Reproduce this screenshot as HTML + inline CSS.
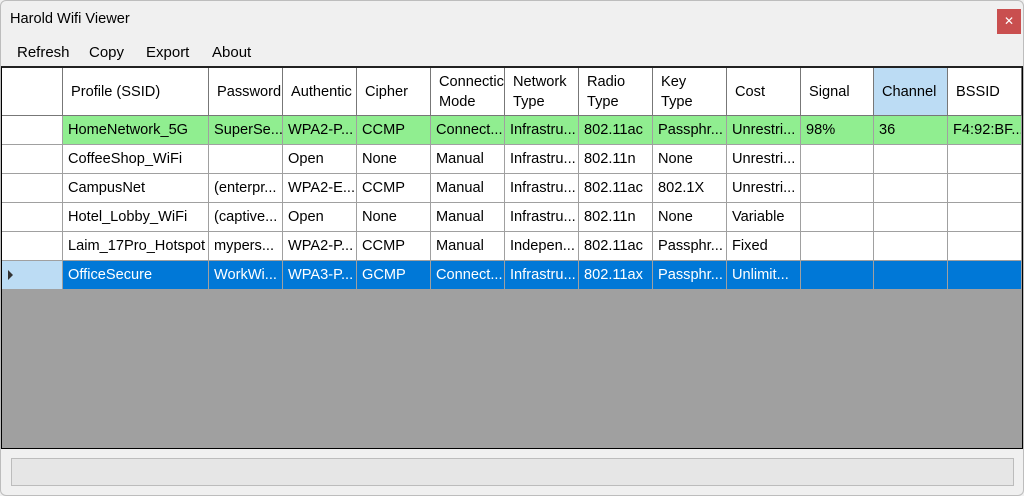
<!DOCTYPE html>
<html><head><style>
*{margin:0;padding:0;box-sizing:border-box}
body{width:1024px;height:496px;background:#f0f0f0;font-family:"Liberation Sans",sans-serif;font-size:14.6px;color:#000;position:relative;overflow:hidden}
.win{position:absolute;left:0;top:0;width:1024px;height:496px;border:1px solid #bdbdbd;border-radius:6px;background:#f0f0f0}
.title{position:absolute;left:10px;top:11px;font-size:14.6px}
.close{position:absolute;left:997px;top:9px;width:24px;height:25px;background:#c94f4f;color:#fff;font-size:12px;text-align:center;line-height:25px}
.menu{position:absolute;top:44px;font-size:15px}
.grid{position:absolute;left:1px;top:66px;width:1022px;height:383px;background:#a0a0a0;border:1px solid #000;border-top:2px solid #222}
.c{position:absolute;white-space:nowrap;overflow:hidden;border-right:1px solid #a0a0a0;border-bottom:1px solid #a0a0a0;padding-left:5px;line-height:28px;background:#fff}
.h{border-right:1px solid #777;border-bottom:1px solid #777;padding-left:8px;line-height:20px}
.status{position:absolute;left:11px;top:458px;width:1003px;height:28px;background:#e6e6e6;border:1px solid #bcbcbc}
</style></head><body>
<div class="win"></div>
<div class="title">Harold Wifi Viewer</div>
<div class="close">✕</div>
<div class="menu" style="left:17px">Refresh</div>
<div class="menu" style="left:89px">Copy</div>
<div class="menu" style="left:146px">Export</div>
<div class="menu" style="left:212px">About</div>
<div class="grid"></div>
<div id="g"></div>
<div class="status"></div>
<script>
var x=[2,63,209,283,357,431,505,579,653,727,801,874,948,1022];
var hd=["","Profile (SSID)","Password","Authentic","Cipher","Connectic<br>Mode","Network<br>Type","Radio<br>Type","Key<br>Type","Cost","Signal","Channel","BSSID"];
var rows=[
["","HomeNetwork_5G","SuperSe...","WPA2-P...","CCMP","Connect...","Infrastru...","802.11ac","Passphr...","Unrestri...","98%","36","F4:92:BF..."],
["","CoffeeShop_WiFi","","Open","None","Manual","Infrastru...","802.11n","None","Unrestri...","","",""],
["","CampusNet","(enterpr...","WPA2-E...","CCMP","Manual","Infrastru...","802.11ac","802.1X","Unrestri...","","",""],
["","Hotel_Lobby_WiFi","(captive...","Open","None","Manual","Infrastru...","802.11n","None","Variable","","",""],
["","Laim_17Pro_Hotspot","mypers...","WPA2-P...","CCMP","Manual","Indepen...","802.11ac","Passphr...","Fixed","","",""],
["","OfficeSecure","WorkWi...","WPA3-P...","GCMP","Connect...","Infrastru...","802.11ax","Passphr...","Unlimit...","","",""]];
var h="";
for(var i=0;i<13;i++){
 var two=hd[i].indexOf("<br>")>0;
 var pad=two?"padding-top:4px;":"padding-top:14px;";
 var bg=i==11?"background:#bcdcf4;":"";
 h+='<div class="c h" style="left:'+x[i]+'px;top:68px;width:'+(x[i+1]-x[i])+'px;height:48px;'+pad+bg+'">'+hd[i]+'</div>';
}
for(var r=0;r<6;r++){
 var y=116+r*29;
 for(var i=0;i<13;i++){
  var bg="",col="";
  if(r==0&&i>0)bg="background:#90ee90;";
  if(r==5){ if(i==0)bg="background:#bcdcf4;"; else {bg="background:#0078d7;";col="color:#fff;";}}
  var t=rows[r][i];
  if(r==5&&i==0)t='<span style="display:inline-block;width:0;height:0;border-top:5px solid transparent;border-bottom:5px solid transparent;border-left:5px solid #333;margin-left:1px;vertical-align:-1px"></span>';
  h+='<div class="c" style="left:'+x[i]+'px;top:'+y+'px;width:'+(x[i+1]-x[i])+'px;height:29px;'+bg+col+'">'+t+'</div>';
 }
}
document.getElementById("g").innerHTML=h;
</script>
</body></html>
